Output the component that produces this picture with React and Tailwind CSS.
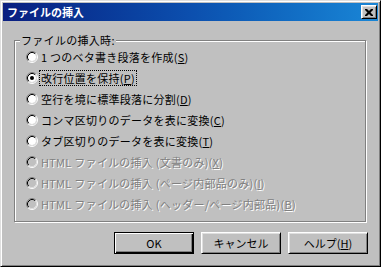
import React from "react";

function Radio({ checked, disabled }) {
  return (
    <svg width="12" height="12" viewBox="0 0 12 12" className="shrink-0">
      <circle cx="6" cy="6" r="4" fill={disabled ? "#c0c0c0" : "#fff"} />
      <path d="M2.11 9.89 A5.5 5.5 0 0 1 9.89 2.11" stroke="#808080" fill="none" />
      <path d="M9.89 2.11 A5.5 5.5 0 0 1 2.11 9.89" stroke="#fff" fill="none" />
      <path d="M2.82 9.18 A4.5 4.5 0 0 1 9.18 2.82" stroke="#000" fill="none" />
      <path d="M9.18 2.82 A4.5 4.5 0 0 1 2.82 9.18" stroke="#dfdfdf" fill="none" />
      {checked && <circle cx="6" cy="6" r="2" fill="#000" />}
    </svg>
  );
}

const rows = [
  { pre: "1 つのベタ書き段落を作成(", key: "S", post: ")" },
  { pre: "改行位置を保持(", key: "P", post: ")", checked: true, focus: true },
  { pre: "空行を境に標準段落に分割(", key: "D", post: ")" },
  { pre: "コンマ区切りのデータを表に変換(", key: "C", post: ")" },
  { pre: "タブ区切りのデータを表に変換(", key: "T", post: ")" },
  { pre: "HTML ファイルの挿入 (文書のみ)(", key: "X", post: ")", disabled: true },
  { pre: "HTML ファイルの挿入 (ページ内部品のみ)(", key: "I", post: ")", disabled: true },
  { pre: "HTML ファイルの挿入 (ヘッダー/ページ内部品)(", key: "B", post: ")", disabled: true },
];

function Button({ children, isDefault }) {
  return (
    <button
      className={
        isDefault
          ? "w-[80px] h-[22px] flex items-center justify-center border border-black bg-[#c0c0c0] text-black shadow-[inset_1px_1px_0_#fff,inset_-1px_-1px_0_#000,inset_-2px_-2px_0_#808080]"
          : "w-[80px] h-[22px] flex items-center justify-center border border-t-white border-l-white border-r-black border-b-black bg-[#c0c0c0] text-black shadow-[inset_1px_1px_0_#dfdfdf,inset_-1px_-1px_0_#808080]"
      }
    >
      {children}
    </button>
  );
}

export default function App() {
  return (
    <div className="w-[381px] h-[267px] bg-[#c0c0c0] border border-t-[#dfdfdf] border-l-[#dfdfdf] border-r-black border-b-black shadow-[inset_1px_1px_0_#fff,inset_-1px_-1px_0_#808080] p-[2px] flex flex-col font-['Noto_Sans_CJK_JP','Noto_Sans',sans-serif] text-[11px] leading-none text-black overflow-hidden">
      <div className="h-[18px] shrink-0 bg-linear-to-r from-[#0a1e80] via-[#0c4fae] to-[#1a86d6] flex items-center pl-[4px] pr-[1px]">
        <span className="flex-1 text-white font-bold text-[11px]">ファイルの挿入</span>
        <div className="w-[16px] h-[14px] border border-t-white border-l-white border-r-black border-b-black bg-[#c0c0c0] shadow-[inset_1px_1px_0_#dfdfdf,inset_-1px_-1px_0_#808080] flex items-center justify-center">
          <svg width="8" height="7" viewBox="0 0 8 7">
            <path d="M0 0h2l2 2 2-2h2v1L5.5 3.5 8 6v1H6L4 5 2 7H0V6l2.5-2.5L0 1z" fill="#000" />
          </svg>
        </div>
      </div>

      <div className="relative ml-[11px] mt-[19px] w-[352px] h-[182px] shrink-0 border border-[#808080] shadow-[inset_1px_1px_0_#fff,1px_1px_0_#fff] pl-[11px] pt-[5px]">
        <span className="absolute left-[5px] top-[-7px] bg-[#c0c0c0] px-[1px] leading-[12px] tracking-[0.3px]">ファイルの挿入時:</span>
        <div className="flex flex-col">
          {rows.map((r, i) => (
            <div key={i} className="h-[21px] flex items-center gap-[1px]">
              <Radio checked={r.checked} disabled={r.disabled} />
              <span
                className={
                  (r.focus ? "border border-dotted border-black " : "border border-transparent ") +
                  "px-[1px] py-[1px] leading-[12px] whitespace-nowrap tracking-[0.25px] " +
                  (r.disabled ? "text-[#808080] [text-shadow:1px_1px_0_#fff]" : "text-black")
                }
              >
                {r.pre}
                <span className="underline underline-offset-1">{r.key}</span>
                {r.post}
              </span>
            </div>
          ))}
        </div>
      </div>

      <div className="flex justify-end gap-[7px] mt-[10px] pr-[10px]">
        <Button isDefault>OK</Button>
        <Button>キャンセル</Button>
        <Button>
          ヘルプ(<span className="underline underline-offset-1">H</span>)
        </Button>
      </div>
    </div>
  );
}
